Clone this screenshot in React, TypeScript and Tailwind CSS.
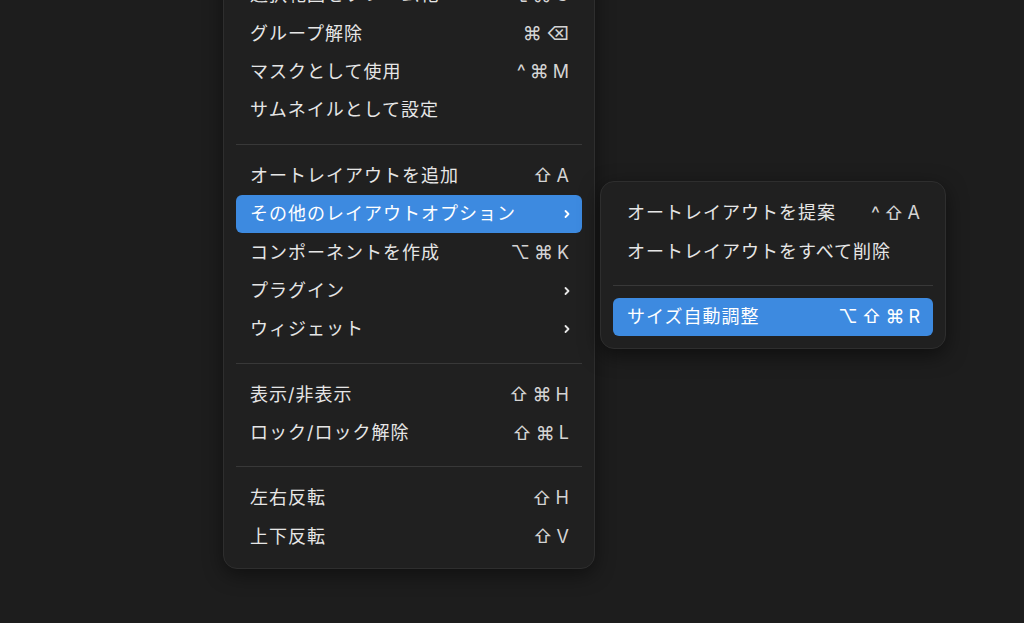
import React from 'react';

type Item = {
  label: string;
  keys?: string[];
  sub?: boolean;
  active?: boolean;
};

type Group = Item[];

const MAIN: Group[] = [
  [
    { label: '選択範囲をフレーム化', keys: ['⌥', '⌘', 'G'] },
    { label: 'グループ解除', keys: ['⌘', '⌫'] },
    { label: 'マスクとして使用', keys: ['^', '⌘', 'M'] },
    { label: 'サムネイルとして設定' },
  ],
  [
    { label: 'オートレイアウトを追加', keys: ['⇧', 'A'] },
    { label: 'その他のレイアウトオプション', sub: true, active: true },
    { label: 'コンポーネントを作成', keys: ['⌥', '⌘', 'K'] },
    { label: 'プラグイン', sub: true },
    { label: 'ウィジェット', sub: true },
  ],
  [
    { label: '表示/非表示', keys: ['⇧', '⌘', 'H'] },
    { label: 'ロック/ロック解除', keys: ['⇧', '⌘', 'L'] },
  ],
  [
    { label: '左右反転', keys: ['⇧', 'H'] },
    { label: '上下反転', keys: ['⇧', 'V'] },
  ],
];

const SUB: Group[] = [
  [
    { label: 'オートレイアウトを提案', keys: ['^', '⇧', 'A'] },
    { label: 'オートレイアウトをすべて削除' },
  ],
  [{ label: 'サイズ自動調整', keys: ['⌥', '⇧', '⌘', 'R'], active: true }],
];

const LETTERS = /^[A-Z]$/;

function Chevron() {
  return (
    <svg width="8" height="10" viewBox="0 0 8 10" className="mr-[-2px]">
      <path d="M2.5 2 L5.5 5 L2.5 8" fill="none" stroke="currentColor" strokeWidth="1.8" strokeLinecap="round" strokeLinejoin="round" />
    </svg>
  );
}

function Row({ item }: { item: Item }) {
  return (
    <div
      className={`h-[38.4px] flex items-center justify-between pl-[14px] pr-[13px] rounded-[6px] ${
        item.active ? 'bg-[#3d8ae0] text-white' : 'text-[#e6e6e6]'
      }`}
    >
      <span className="text-[18px] tracking-[1px] leading-none whitespace-nowrap">{item.label}</span>
      {item.keys && (
        <span
          className={`flex items-center gap-[4px] leading-none font-['Inter','DejaVu_Sans',sans-serif] ${
            item.active ? 'text-white' : 'text-[#d4d4d4]'
          }`}
        >
          {item.keys.map((k, i) => (
            <span key={i} className={LETTERS.test(k) ? 'text-[18px]' : 'text-[19px]'}>
              {k}
            </span>
          ))}
        </span>
      )}
      {item.sub && <Chevron />}
    </div>
  );
}

function Menu({ groups }: { groups: Group[] }) {
  return (
    <>
      {groups.map((g, gi) => (
        <div key={gi}>
          {gi > 0 && <div className="h-px bg-[#383838] mt-[14px] mb-[12px]" />}
          {g.map((item, i) => (
            <Row key={i} item={item} />
          ))}
        </div>
      ))}
    </>
  );
}

export default function App() {
  return (
    <div className="relative w-[1024px] h-[623px] overflow-hidden bg-[#1d1d1d] font-['Inter','Noto_Sans_CJK_JP',sans-serif]">
      {/* Main context menu */}
      <div className="absolute left-[223px] top-[-37px] w-[372px] rounded-[14px] bg-[#202020] border border-[#2e2e2e] p-[12px] shadow-[0_6px_20px_rgba(0,0,0,0.45)]">
        <Menu groups={MAIN} />
      </div>

      {/* Submenu */}
      <div className="absolute left-[600px] top-[181px] w-[346px] rounded-[14px] bg-[#202020] border border-[#2e2e2e] p-[12px] shadow-[0_6px_20px_rgba(0,0,0,0.5)]">
        <Menu groups={SUB} />
      </div>
    </div>
  );
}
